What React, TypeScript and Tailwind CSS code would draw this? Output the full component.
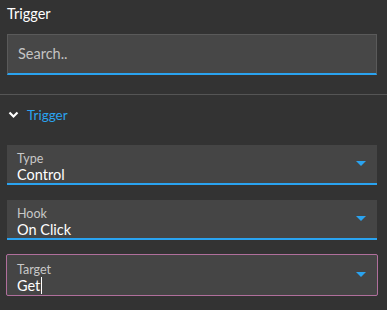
import { useState } from 'react';

const ff = { fontFamily: 'Lato, "Noto Sans", sans-serif' };

function Arrow() {
  return (
    <svg width="10" height="6" viewBox="0 0 10 6" className="shrink-0">
      <path d="M0 0 L10 0 L5 5 Z" fill="#2aa3f0" />
    </svg>
  );
}

function SelectField({ label, value, focused, caret }: { label: string; value: string; focused?: boolean; caret?: boolean }) {
  return (
    <div
      className={`flex items-center justify-between pl-[10px] pr-[11px] bg-[#454545] ${
        focused
          ? 'h-[42px] border border-[#b06f9c] rounded-[2px] mx-[-1px] mt-[-1px]'
          : 'h-[40px] border-b-[2px] border-[#2aa3f0]'
      }`}
    >
      <div className="flex flex-col pt-[6px]">
        <span className="text-[12.5px] leading-[15px] text-[#c8c8c8]">{label}</span>
        <span className="text-[14.5px] leading-[18px] text-white flex items-center">
          {value}
          {caret && <span className="inline-block w-px h-[17px] bg-white ml-[1px]" />}
        </span>
      </div>
      <Arrow />
    </div>
  );
}

export default function App() {
  const [query, setQuery] = useState('');

  return (
    <div className="w-[387px] h-[310px] bg-[#333333] overflow-hidden" style={ff}>
      {/* Header */}
      <div className="pl-[7px] pr-[10px] pt-[5px]">
        <h2 className="text-[14.5px] leading-[18px] text-white">Trigger</h2>
        <div className="mt-[11px] h-[41px] bg-[#474747] border border-[#5a5a5a] border-b-[2px] border-b-[#2aa3f0] flex items-center px-[10px]">
          <input
            value={query}
            onChange={(e) => setQuery(e.target.value)}
            placeholder="Search.."
            className="w-full bg-transparent outline-none text-[14.5px] text-white placeholder:text-[#c4c4c4]"
          />
        </div>
      </div>

      <div className="mt-[19px] border-t border-[#555555]" />

      {/* Section */}
      <div className="pl-[7px] pr-[10px]">
        <div className="flex items-center gap-[8px] pt-[11px] pl-[1px]">
          <svg width="11" height="8" viewBox="0 0 11 8">
            <path d="M1.5 1.5 L5.5 5.5 L9.5 1.5" fill="none" stroke="white" strokeWidth="2.2" />
          </svg>
          <span className="text-[13.5px] leading-[18px] text-[#2aa3f0]">Trigger</span>
        </div>

        <div className="mt-[21px] flex flex-col gap-[15px]">
          <SelectField label="Type" value="Control" />
          <SelectField label="Hook" value="On Click" />
          <SelectField label="Target" value="Get" focused caret />
        </div>
      </div>
    </div>
  );
}
